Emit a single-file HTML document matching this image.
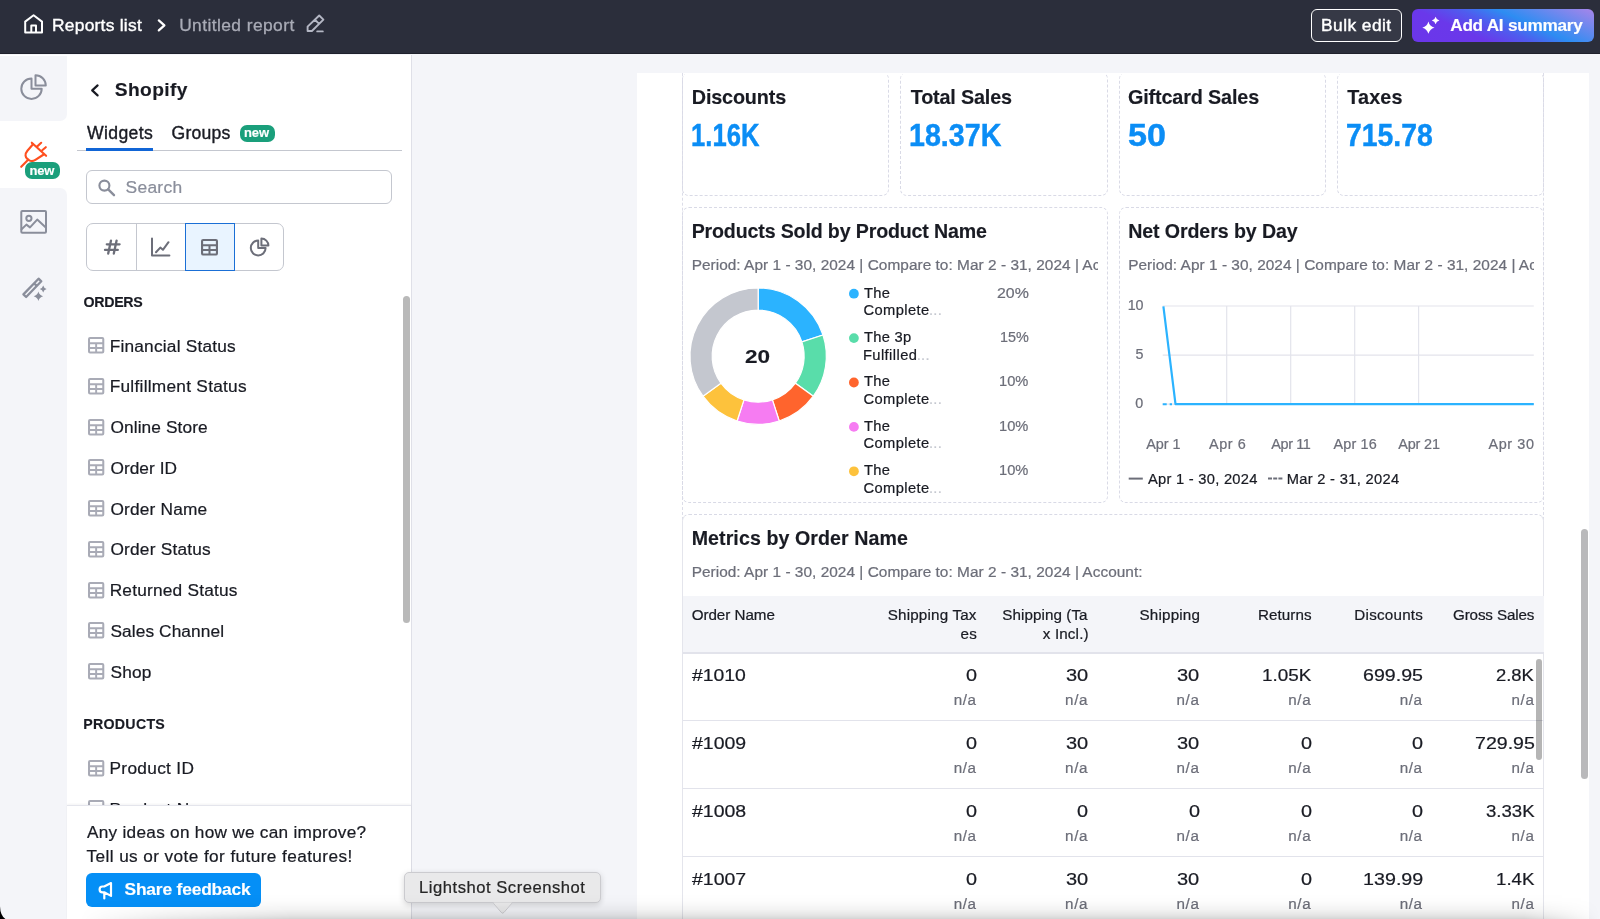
<!DOCTYPE html>
<html lang="en">
<head>
<meta charset="utf-8">
<title>Untitled report</title>
<style>
*{box-sizing:border-box;margin:0;padding:0}
html,body{width:1600px;height:919px;overflow:hidden;background:#f4f5f9;font-family:"Liberation Sans",sans-serif;color:#191b23}
body{position:relative}
.abs{position:absolute}
svg{position:absolute;overflow:visible}
.t{position:absolute;white-space:pre;line-height:1;color:#191b23;-webkit-text-stroke:0.22px}
.t.b{-webkit-text-stroke:0.15px}
.card{position:absolute;border:1px dashed #d9dae6;border-radius:7px}
.card.c1{border-top-color:transparent}
.ti{position:absolute;left:87.7px;width:16.3px;height:16.6px}
.hl{position:absolute;left:682.5px;width:861px;height:1.4px;background:#e2e3eb}
</style>
</head>
<body>
<div id="app" class="abs" style="left:0;top:0;width:1600px;height:919px;will-change:transform">

<!-- TOPBAR -->
<div class="abs" style="left:0;top:0;width:1600px;height:54px;background:#2b2e3b;border-bottom:1px solid #1f212c"></div>
<svg style="left:0;top:0" width="340" height="53" fill="none" stroke-linecap="round" stroke-linejoin="round">
  <path d="M25.2 21.6 L33.6 15.3 L42 21.6 V32.6 H25.2 Z M31.300 32.400 V25.600 H36 V32.400" stroke="#fff" stroke-width="2"/>
  <path d="M158.8 20.4 L164.4 25.4 L158.8 30.4" stroke="#fff" stroke-width="2.2"/>
  <path d="M307.6 31 V26.6 L319.2 15.5 L323.4 19.6 L311.9 31 Z M314.9 19.7 L319.2 23.9 M317.2 31.4 H322.8" stroke="#b4b7c4" stroke-width="1.9"/>
</svg>
<div class="abs" style="left:1310.9px;top:8.7px;width:91.3px;height:33.2px;border:1px solid #fff;border-radius:6px;background:#363946"></div>
<div class="abs" style="left:1411.6px;top:8.7px;width:182.8px;height:33.2px;border-radius:6px;background:linear-gradient(24deg,#6b36ea 0%,#6a38ea 30%,#4f5cee 47%,#2d8df2 62%,#6f88ee 82%,#a885ea 100%)"></div>
<svg style="left:0;top:0" width="1600" height="53" fill="#fff"><path d="M1428.4 21.60 Q1429.62 26.48 1434.50 27.7 Q1429.62 28.92 1428.4 33.80 Q1427.18 28.92 1422.30 27.7 Q1427.18 26.48 1428.4 21.60Z M1435.6 16.70 Q1436.36 19.74 1439.40 20.5 Q1436.36 21.26 1435.6 24.30 Q1434.84 21.26 1431.80 20.5 Q1434.84 19.74 1435.6 16.70Z"/></svg>

<!-- RAIL -->
<div class="abs" style="left:0;top:55px;width:67px;height:864px;background:#fff"></div>
<div class="abs" style="left:0;top:56px;width:67px;height:65px;background:#f4f5f9;border-bottom-right-radius:7px"></div>
<div class="abs" style="left:0;top:188px;width:67px;height:731px;background:#f4f5f9;border-top-right-radius:7px"></div>
<svg style="left:0;top:53px" width="67" height="270" fill="none" stroke="#8a8e9b" stroke-width="2" stroke-linecap="round" stroke-linejoin="round">
  <!-- pie -->
  <path d="M31.5 25.5 A10.2 10.2 0 1 0 41.7 35.7 H31.5 Z"/>
  <path d="M35.5 22.3 A10.3 10.3 0 0 1 45.8 32.6 H35.5 Z"/>
  <!-- image -->
  <rect x="21.3" y="158" width="24.7" height="21.8" rx="1"/>
  <circle cx="28.9" cy="165.3" r="2.6"/>
  <path d="M21.6 176.2 L26.4 171.6 L30 174.4 L37.2 166.6 L45.8 174.6"/>
  <!-- wand -->
  <path d="M38.56 225.68 L41.3 228.32 L26.14 244.02 L23.4 241.38 Z M34.1 230.3 L36.85 232.9" stroke-width="2.3"/>
</svg>
<svg style="left:0;top:53px" width="67" height="270" fill="#8a8e9b">
  <path d="M38.4 238.60 Q39.34 242.36 43.10 243.3 Q39.34 244.24 38.4 248.00 Q37.46 244.24 33.70 243.3 Q37.46 242.36 38.4 238.60Z M43.2 232.60 Q43.88 235.32 46.60 236 Q43.88 236.68 43.2 239.40 Q42.52 236.68 39.80 236 Q42.52 235.32 43.2 232.60Z"/>
</svg>
<!-- plug -->
<svg style="left:0;top:53px" width="67" height="140" fill="none" stroke="#ff4f1f" stroke-width="2.1" stroke-linecap="round" stroke-linejoin="round">
  <path d="M21.2 113.800 L28.4 106.600"/>
  <path d="M31.800 89.700 L46.100 102.800"/>
  <path d="M33 91.200 L27.400 97.800 C24.600 101.200 25.200 104.400 27.600 106.200 C30.200 108.600 33 108.400 35.400 106.800 L43.700 101.500"/>
  <path d="M37 93.600 L41.200 89.800 M42.200 97.300 L45.800 94.200"/>
</svg>
<div class="abs" style="left:25.1px;top:162px;width:35px;height:16.9px;border-radius:7px;background:#1a9f7b"></div>

<!-- SIDEBAR -->
<div class="abs" style="left:67px;top:55px;width:344px;height:864px;background:#fff"></div>
<div class="abs" style="left:411px;top:55px;width:1.3px;height:864px;background:#dfe0e8"></div>
<svg style="left:67px;top:53px" width="345" height="230" fill="none" stroke-linecap="round" stroke-linejoin="round">
  <path d="M30.6 32.4 L25.2 37.4 L30.6 42.4" stroke="#191b23" stroke-width="2.2"/>
</svg>
<div class="abs" style="left:76.8px;top:150.2px;width:325.4px;height:1.1px;background:#c4c7cf"></div>
<div class="abs" style="left:86.2px;top:147.6px;width:67px;height:3.4px;background:#1165d6"></div>
<div class="abs" style="left:239.6px;top:124.8px;width:35px;height:16.8px;border-radius:7px;background:#1a9f7b"></div>
<div class="abs" style="left:86.4px;top:170.2px;width:305.6px;height:33.6px;border:1px solid #c4c7cf;border-radius:6px;background:#fff"></div>
<svg style="left:67px;top:53px" width="345" height="230" fill="none" stroke-linecap="round"><circle cx="37.4" cy="132.600" r="5" stroke="#8a8e9b" stroke-width="2.1"/><path d="M41.2 136.400 L47 142.200" stroke="#8a8e9b" stroke-width="2.4"/></svg>
<div class="abs" style="left:86.4px;top:223.3px;width:198.1px;height:47.5px;border:1px solid #c4c7cf;border-radius:7px;background:#fff"></div>
<div class="abs" style="left:135.9px;top:224px;width:1px;height:46px;background:#c4c7cf"></div>
<div class="abs" style="left:185px;top:223.3px;width:49.8px;height:47.5px;border:1px solid #1a6fd6;background:#e9f4ff"></div>
<svg style="left:86px;top:222px" width="200" height="50" fill="none" stroke="#6c6e79" stroke-width="2" stroke-linecap="round" stroke-linejoin="round">
  <path d="M20.800 22.300 H33.600 M19 27.900 H31.800 M25 18.600 L22.200 31.600 M30.600 18.600 L27.800 31.600" stroke-width="2.3"/>
  <path d="M66 16.500 V33.500 H83.400 M70 30.200 L74.300 25.600 L76.900 27.800 L82.500 20.200"/>
  <path d="M172.200 18.600 A7.4 7.4 0 1 0 179.600 26 H172.200 Z M175.400 16.600 A7 7 0 0 1 182.400 23.600 H175.400 Z"/>
</svg>
<svg style="left:201.3px;top:238.9px" width="17" height="16.6" viewBox="0 0 16 16" preserveAspectRatio="none" fill="none" stroke="#6c6e79"><rect x="1" y="1" width="14" height="14" rx="1" stroke-width="2"/><path d="M1 6.1H15M1 10.6H15M8 6V15" stroke-width="1.9"/></svg>
<div class="abs" style="left:403.3px;top:295.7px;width:7px;height:327.5px;border-radius:3.5px;background:#b9b9b9"></div>
<svg style="left:87.7px;top:337.2px" width="16.3" height="16.6" viewBox="0 0 16 16" preserveAspectRatio="none" fill="none" stroke="#a9abb6"><rect x="1" y="1" width="14" height="14" rx="1" stroke-width="2"/><path d="M1 6.1H15M1 10.6H15M8 6V15" stroke-width="1.9"/></svg>
<svg style="left:87.7px;top:377.95px" width="16.3" height="16.6" viewBox="0 0 16 16" preserveAspectRatio="none" fill="none" stroke="#a9abb6"><rect x="1" y="1" width="14" height="14" rx="1" stroke-width="2"/><path d="M1 6.1H15M1 10.6H15M8 6V15" stroke-width="1.9"/></svg>
<svg style="left:87.7px;top:418.7px" width="16.3" height="16.6" viewBox="0 0 16 16" preserveAspectRatio="none" fill="none" stroke="#a9abb6"><rect x="1" y="1" width="14" height="14" rx="1" stroke-width="2"/><path d="M1 6.1H15M1 10.6H15M8 6V15" stroke-width="1.9"/></svg>
<svg style="left:87.7px;top:459.45px" width="16.3" height="16.6" viewBox="0 0 16 16" preserveAspectRatio="none" fill="none" stroke="#a9abb6"><rect x="1" y="1" width="14" height="14" rx="1" stroke-width="2"/><path d="M1 6.1H15M1 10.6H15M8 6V15" stroke-width="1.9"/></svg>
<svg style="left:87.7px;top:500.2px" width="16.3" height="16.6" viewBox="0 0 16 16" preserveAspectRatio="none" fill="none" stroke="#a9abb6"><rect x="1" y="1" width="14" height="14" rx="1" stroke-width="2"/><path d="M1 6.1H15M1 10.6H15M8 6V15" stroke-width="1.9"/></svg>
<svg style="left:87.7px;top:540.95px" width="16.3" height="16.6" viewBox="0 0 16 16" preserveAspectRatio="none" fill="none" stroke="#a9abb6"><rect x="1" y="1" width="14" height="14" rx="1" stroke-width="2"/><path d="M1 6.1H15M1 10.6H15M8 6V15" stroke-width="1.9"/></svg>
<svg style="left:87.7px;top:581.7px" width="16.3" height="16.6" viewBox="0 0 16 16" preserveAspectRatio="none" fill="none" stroke="#a9abb6"><rect x="1" y="1" width="14" height="14" rx="1" stroke-width="2"/><path d="M1 6.1H15M1 10.6H15M8 6V15" stroke-width="1.9"/></svg>
<svg style="left:87.7px;top:622.45px" width="16.3" height="16.6" viewBox="0 0 16 16" preserveAspectRatio="none" fill="none" stroke="#a9abb6"><rect x="1" y="1" width="14" height="14" rx="1" stroke-width="2"/><path d="M1 6.1H15M1 10.6H15M8 6V15" stroke-width="1.9"/></svg>
<svg style="left:87.7px;top:663.2px" width="16.3" height="16.6" viewBox="0 0 16 16" preserveAspectRatio="none" fill="none" stroke="#a9abb6"><rect x="1" y="1" width="14" height="14" rx="1" stroke-width="2"/><path d="M1 6.1H15M1 10.6H15M8 6V15" stroke-width="1.9"/></svg>
<svg style="left:87.7px;top:759.5px" width="16.3" height="16.6" viewBox="0 0 16 16" preserveAspectRatio="none" fill="none" stroke="#a9abb6"><rect x="1" y="1" width="14" height="14" rx="1" stroke-width="2"/><path d="M1 6.1H15M1 10.6H15M8 6V15" stroke-width="1.9"/></svg>
<svg style="left:87.7px;top:800.25px" width="16.3" height="16.6" viewBox="0 0 16 16" preserveAspectRatio="none" fill="none" stroke="#a9abb6"><rect x="1" y="1" width="14" height="14" rx="1" stroke-width="2"/><path d="M1 6.1H15M1 10.6H15M8 6V15" stroke-width="1.9"/></svg>
<!-- footer -->
<div class="abs" style="left:67px;top:804.8px;width:344px;height:115px;background:#fff;border-top:1.2px solid #e4e5ec;box-shadow:0 -1px 2px rgba(25,27,35,.05);z-index:1"></div>
<div class="abs" style="left:86.3px;top:873.2px;width:175.1px;height:33.6px;border-radius:6px;background:#058ff6;z-index:2"></div>
<svg style="left:96px;top:880px;z-index:3" width="20" height="22" fill="none" stroke="#fff" stroke-width="2" stroke-linejoin="round" stroke-linecap="round">
  <path d="M15 3.100 L8.200 6.500 H6.500 A2.900 2.900 0 0 0 6.500 12.300 H8.200 L15 15.900 Z M8.300 13 V18.500" stroke-width="2.2"/>
</svg>
<!-- tooltip -->
<div class="abs" style="left:403.6px;top:871.7px;width:197.7px;height:31.7px;background:#e9e9ea;border:1px solid #cbcbcf;border-radius:5px;box-shadow:0 2px 6px rgba(0,0,0,.16);z-index:2"></div>
<svg style="left:490px;top:902px;z-index:3" width="26" height="14"><path d="M3.400 0.400 H21.900 L14 10.400 Q12.600 12 11.200 10.400 Z" fill="#e9e9ea"/><path d="M3.400 1.200 L11.200 10.400 Q12.600 12 14 10.400 L21.900 1.200" fill="none" stroke="#cbcbcf" stroke-width="1"/></svg>

<!-- MAIN -->
<div class="abs" style="left:637px;top:72.8px;width:952px;height:847px;background:#fff"></div>
<div class="abs" style="left:681.8px;top:73px;width:862.5px;height:846px;border-left:1px dashed #dcdde8;border-right:1px dashed #dcdde8"></div>
<div class="card c1" style="left:681.8px;top:72.4px;width:207.7px;height:124px"></div>
<div class="card c1" style="left:900.2px;top:72.4px;width:207.4px;height:124px"></div>
<div class="card c1" style="left:1118.5px;top:72.4px;width:207.4px;height:124px"></div>
<div class="card c1" style="left:1336.6px;top:72.4px;width:207.700px;height:124px"></div>
<div class="card" style="left:681.8px;top:207.2px;width:425.8px;height:296px"></div>
<div class="card" style="left:1118.5px;top:207.2px;width:425.8px;height:296px"></div>
<div class="card" style="left:681.8px;top:514.2px;width:862.5px;height:420px;border-left:1px solid #e4e5ec;border-right:1px solid #e4e5ec;border-bottom-left-radius:0;border-bottom-right-radius:0"></div>
<svg style="left:0;top:0" width="1600" height="919"><path d="M758.15 287.90 A68.2 68.2 0 0 1 823.01 335.03 L801.90 341.89 A46 46 0 0 0 758.15 310.10 Z" fill="#2bb3ff" stroke="#fff" stroke-width="1.2"/><path d="M823.01 335.03 A68.2 68.2 0 0 1 813.32 396.19 L795.36 383.14 A46 46 0 0 0 801.90 341.89 Z" fill="#59ddaa" stroke="#fff" stroke-width="1.2"/><path d="M813.32 396.19 A68.2 68.2 0 0 1 779.22 420.96 L772.36 399.85 A46 46 0 0 0 795.36 383.14 Z" fill="#ff642d" stroke="#fff" stroke-width="1.2"/><path d="M779.22 420.96 A68.2 68.2 0 0 1 737.08 420.96 L743.94 399.85 A46 46 0 0 0 772.36 399.85 Z" fill="#f67cf2" stroke="#fff" stroke-width="1.2"/><path d="M737.08 420.96 A68.2 68.2 0 0 1 702.98 396.19 L720.94 383.14 A46 46 0 0 0 743.94 399.85 Z" fill="#fdc23c" stroke="#fff" stroke-width="1.2"/><path d="M702.98 396.19 A68.2 68.2 0 0 1 758.15 287.90 L758.15 310.10 A46 46 0 0 0 720.94 383.14 Z" fill="#c4c7cf" stroke="#fff" stroke-width="1.2"/></svg>
<svg style="left:0;top:0" width="1600" height="919">
<circle cx="853.9" cy="293.7" r="4.9" fill="#2bb3ff"/><circle cx="853.9" cy="338.1" r="4.9" fill="#59ddaa"/><circle cx="853.9" cy="382.5" r="4.9" fill="#ff642d"/><circle cx="853.9" cy="426.9" r="4.9" fill="#f67cf2"/><circle cx="853.9" cy="471.3" r="4.9" fill="#fdc23c"/>
  <g stroke="#e3e4ec" stroke-width="1.2" fill="none">
    <path d="M1162.7 306 H1533.800 M1162.700 355.100 H1533.800 M1162.700 404.200 H1533.800"/>
    <path d="M1226.700 306 V404.200 M1290.700 306 V404.200 M1354.700 306 V404.200 M1418.600 306 V404.200"/>
  </g>
  <path d="M1162.700 404.200 H1172" stroke="#2bb3ff" stroke-width="2" stroke-dasharray="4 3" fill="none"/>
  <path d="M1163.400 306.400 L1175.500 404.200 H1533.800" stroke="#2bb3ff" stroke-width="2.2" fill="none" stroke-linejoin="round"/>
  <path d="M1128.700 478.600 H1142.800" stroke="#6c6e79" stroke-width="2" fill="none"/>
  <path d="M1268 478.600 H1282.400" stroke="#6c6e79" stroke-width="2" stroke-dasharray="4 1.2" fill="none"/>
</svg>
<!-- table -->
<div class="abs" style="left:682.6px;top:596.3px;width:861px;height:56.2px;background:#f4f5f9"></div>
<div class="hl" style="top:652.2px"></div>
<div class="hl" style="top:720.1px"></div>
<div class="hl" style="top:788.100px"></div>
<div class="hl" style="top:856.100px"></div>
<div class="abs" style="left:1535.6px;top:659px;width:6.6px;height:100.6px;border-radius:3.3px;background:rgba(0,0,0,.29);z-index:2"></div>
<div class="abs" style="left:1581px;top:529.4px;width:7px;height:249.8px;border-radius:3.5px;background:#b9b9bb"></div>

<!-- TEXT -->
<div class="t" style="left:52.0px;top:17px;font-size:17.4px;letter-spacing:0.25px;color:#fff;-webkit-text-stroke:0.4px;">Reports list</div>
<div class="t" style="left:179.15px;top:17px;font-size:17.4px;letter-spacing:0.418px;color:#a9abb6;-webkit-text-stroke:0.3px;">Untitled report</div>
<div class="t" style="left:1321.0px;top:17px;font-size:17.4px;letter-spacing:0.438px;color:#fff;-webkit-text-stroke:0.4px;">Bulk edit</div>
<div class="t b" style="left:1450.25px;top:17px;font-size:17.2px;font-weight:bold;letter-spacing:-0.269px;color:#fff;">Add AI summary</div>
<div class="t b" style="left:114.8px;top:80px;font-size:19.2px;font-weight:bold;letter-spacing:0.375px;">Shopify</div>
<div class="t" style="left:86.95px;top:125px;font-size:17.6px;letter-spacing:0.392px;-webkit-text-stroke:0.38px;">Widgets</div>
<div class="t" style="left:171.6px;top:125px;font-size:17.6px;letter-spacing:0.2px;-webkit-text-stroke:0.38px;">Groups</div>
<div class="t b" style="left:243.95px;top:126px;font-size:13px;font-weight:bold;letter-spacing:-0.1px;color:#fff;">new</div>
<div class="t b" style="left:29.55px;top:164px;font-size:13px;font-weight:bold;letter-spacing:-0.2px;color:#fff;">new</div>
<div class="t" style="left:125.55px;top:179px;font-size:17.4px;letter-spacing:0.29px;color:#8a8e9b;">Search</div>
<div class="t b" style="left:83.6px;top:295px;font-size:14.2px;font-weight:bold;letter-spacing:-0.31px;">ORDERS</div>
<div class="t b" style="left:83.3px;top:717px;font-size:14.2px;font-weight:bold;letter-spacing:0.271px;">PRODUCTS</div>
<div class="t" style="left:109.7px;top:338px;font-size:17.3px;letter-spacing:0.203px;">Financial Status</div>
<div class="t" style="left:109.7px;top:378px;font-size:17.3px;letter-spacing:0.259px;">Fulfillment Status</div>
<div class="t" style="left:110.45px;top:419px;font-size:17.3px;letter-spacing:0.109px;">Online Store</div>
<div class="t" style="left:110.45px;top:460px;font-size:17.3px;letter-spacing:0.036px;">Order ID</div>
<div class="t" style="left:110.45px;top:501px;font-size:17.3px;letter-spacing:0.178px;">Order Name</div>
<div class="t" style="left:110.45px;top:541px;font-size:17.3px;letter-spacing:0.209px;">Order Status</div>
<div class="t" style="left:109.7px;top:582px;font-size:17.3px;letter-spacing:0.204px;">Returned Status</div>
<div class="t" style="left:110.45px;top:623px;font-size:17.3px;letter-spacing:0.1px;">Sales Channel</div>
<div class="t" style="left:110.45px;top:664px;font-size:17.3px;letter-spacing:0.2px;">Shop</div>
<div class="t" style="left:109.5px;top:760px;font-size:17.3px;letter-spacing:0.306px;">Product ID</div>
<div class="t" style="left:109.5px;top:801px;font-size:17.3px;letter-spacing:0.35px;">Product Name</div>
<div class="t" style="left:87.0px;top:824px;font-size:17.2px;letter-spacing:0.282px;z-index:3;">Any ideas on how we can improve?</div>
<div class="t" style="left:86.5px;top:848px;font-size:17.2px;letter-spacing:0.413px;z-index:3;">Tell us or vote for future features!</div>
<div class="t b" style="left:124.5px;top:881px;font-size:17.4px;font-weight:bold;letter-spacing:-0.185px;color:#fff;z-index:3;">Share feedback</div>
<div class="t" style="left:419.05px;top:880px;font-size:16.6px;letter-spacing:0.526px;color:#262626;z-index:3;">Lightshot Screenshot</div>
<div class="t b" style="left:691.75px;top:88px;font-size:19.8px;font-weight:bold;letter-spacing:-0.15px;">Discounts</div>
<div class="t b" style="left:910.75px;top:88px;font-size:19.8px;font-weight:bold;letter-spacing:-0.17px;">Total Sales</div>
<div class="t b" style="left:1128.0px;top:88px;font-size:19.8px;font-weight:bold;letter-spacing:-0.142px;">Giftcard Sales</div>
<div class="t b" style="left:1347.25px;top:88px;font-size:19.8px;font-weight:bold;letter-spacing:0.15px;">Taxes</div>
<div class="t b" style="left:690.62px;top:120px;font-size:31.4px;font-weight:bold;color:#0b8df5;transform:scaleX(0.8166);transform-origin:0 0;-webkit-text-stroke:0.45px;">1.16K</div>
<div class="t b" style="left:909.18px;top:120px;font-size:31.4px;font-weight:bold;color:#0b8df5;transform:scaleX(0.9124);transform-origin:0 0;-webkit-text-stroke:0.45px;">18.37K</div>
<div class="t b" style="left:1128.11px;top:120px;font-size:31.4px;font-weight:bold;color:#0b8df5;transform:scaleX(1.0862);transform-origin:0 0;-webkit-text-stroke:0.45px;">50</div>
<div class="t b" style="left:1346.37px;top:120px;font-size:31.4px;font-weight:bold;color:#0b8df5;transform:scaleX(0.9035);transform-origin:0 0;-webkit-text-stroke:0.45px;">715.78</div>
<div class="t b" style="left:691.65px;top:222px;font-size:19.6px;font-weight:bold;letter-spacing:-0.146px;">Products Sold by Product Name</div>
<div class="t b" style="left:1128.15px;top:222px;font-size:19.6px;font-weight:bold;letter-spacing:-0.088px;">Net Orders by Day</div>
<div class="t b" style="left:691.65px;top:529px;font-size:19.6px;font-weight:bold;letter-spacing:0.09px;">Metrics by Order Name</div>
<div class="t" style="left:863.95px;top:286px;font-size:14.7px;letter-spacing:0.3px;">The</div>
<div class="t" style="left:863.45px;top:303px;font-size:14.7px;letter-spacing:0.4px;">Complete</div>
<div class="t" style="left:928.95px;top:303px;font-size:14.7px;letter-spacing:0.275px;color:#c4c7cf;">...</div>
<div class="t" style="left:996.89px;top:286px;font-size:14.7px;color:#6c6e79;transform:scaleX(1.0821);transform-origin:0 0;">20%</div>
<div class="t" style="left:863.95px;top:330px;font-size:14.7px;letter-spacing:0.3px;">The 3p</div>
<div class="t" style="left:862.95px;top:348px;font-size:14.7px;letter-spacing:0.425px;">Fulfilled</div>
<div class="t" style="left:916.65px;top:348px;font-size:14.7px;letter-spacing:0.375px;color:#c4c7cf;">...</div>
<div class="t" style="left:999.82px;top:330px;font-size:14.7px;color:#6c6e79;transform:scaleX(0.9802);transform-origin:0 0;">15%</div>
<div class="t" style="left:863.95px;top:374px;font-size:14.7px;letter-spacing:0.3px;">The</div>
<div class="t" style="left:863.45px;top:392px;font-size:14.7px;letter-spacing:0.4px;">Complete</div>
<div class="t" style="left:928.95px;top:392px;font-size:14.7px;letter-spacing:0.275px;color:#c4c7cf;">...</div>
<div class="t" style="left:999.3px;top:374px;font-size:14.7px;color:#6c6e79;transform:scaleX(0.9982);transform-origin:0 0;">10%</div>
<div class="t" style="left:863.95px;top:419px;font-size:14.7px;letter-spacing:0.3px;">The</div>
<div class="t" style="left:863.45px;top:436px;font-size:14.7px;letter-spacing:0.4px;">Complete</div>
<div class="t" style="left:928.95px;top:436px;font-size:14.7px;letter-spacing:0.275px;color:#c4c7cf;">...</div>
<div class="t" style="left:999.3px;top:419px;font-size:14.7px;color:#6c6e79;transform:scaleX(0.9982);transform-origin:0 0;">10%</div>
<div class="t" style="left:863.95px;top:463px;font-size:14.7px;letter-spacing:0.3px;">The</div>
<div class="t" style="left:863.45px;top:481px;font-size:14.7px;letter-spacing:0.4px;">Complete</div>
<div class="t" style="left:928.95px;top:481px;font-size:14.7px;letter-spacing:0.275px;color:#c4c7cf;">...</div>
<div class="t" style="left:999.3px;top:463px;font-size:14.7px;color:#6c6e79;transform:scaleX(0.9982);transform-origin:0 0;">10%</div>
<div class="t b" style="left:745.3px;top:348px;font-size:18.8px;font-weight:bold;transform:scaleX(1.2);transform-origin:0 0;">20</div>
<div class="t" style="left:1127.7px;top:298px;font-size:14.3px;letter-spacing:-0.15px;color:#6c6e79;">10</div>
<div class="t" style="left:1135.55px;top:347px;font-size:14.3px;color:#6c6e79;">5</div>
<div class="t" style="left:1135.3px;top:396px;font-size:14.3px;color:#6c6e79;">0</div>
<div class="t" style="left:1146.3px;top:437px;font-size:14.4px;letter-spacing:-0.037px;color:#6c6e79;">Apr 1</div>
<div class="t" style="left:1209.1px;top:437px;font-size:14.4px;letter-spacing:0.538px;color:#6c6e79;">Apr 6</div>
<div class="t" style="left:1271.2px;top:437px;font-size:14.4px;letter-spacing:-0.33px;color:#6c6e79;">Apr 11</div>
<div class="t" style="left:1333.5px;top:437px;font-size:14.4px;letter-spacing:0.15px;color:#6c6e79;">Apr 16</div>
<div class="t" style="left:1398.2px;top:437px;font-size:14.4px;letter-spacing:-0.13px;color:#6c6e79;">Apr 21</div>
<div class="t" style="left:1488.5px;top:437px;font-size:14.4px;letter-spacing:0.61px;color:#6c6e79;">Apr 30</div>
<div class="t" style="left:1147.9px;top:472px;font-size:14.7px;letter-spacing:0.28px;">Apr 1 - 30, 2024</div>
<div class="t" style="left:1286.65px;top:472px;font-size:14.7px;letter-spacing:0.31px;">Mar 2 - 31, 2024</div>
<div class="t" style="left:691.65px;top:607px;font-size:15.2px;letter-spacing:-0.028px;">Order Name</div>
<div class="t" style="left:887.75px;top:607px;font-size:15.2px;letter-spacing:0.177px;">Shipping Tax</div>
<div class="t" style="left:960.6px;top:626px;font-size:15.2px;letter-spacing:0.1px;">es</div>
<div class="t" style="left:1002.25px;top:607px;font-size:15.2px;letter-spacing:0.077px;">Shipping (Ta</div>
<div class="t" style="left:1042.75px;top:626px;font-size:15.2px;letter-spacing:0.157px;">x Incl.)</div>
<div class="t" style="left:1139.55px;top:607px;font-size:15.2px;letter-spacing:0.171px;">Shipping</div>
<div class="t" style="left:1258.05px;top:607px;font-size:15.2px;letter-spacing:0.042px;">Returns</div>
<div class="t" style="left:1354.35px;top:607px;font-size:15.2px;letter-spacing:0.231px;">Discounts</div>
<div class="t" style="left:1452.95px;top:607px;font-size:15.2px;letter-spacing:-0.12px;">Gross Sales</div>
<div class="t" style="left:692.3px;top:667px;font-size:17.4px;transform:scaleX(1.1141);transform-origin:0 0;">#1010</div>
<div class="t" style="left:965.95px;top:667px;font-size:17.4px;transform:scaleX(1.1394);transform-origin:0 0;">0</div>
<div class="t" style="left:953.7px;top:692px;font-size:15.2px;letter-spacing:0.625px;color:#6c6e79;">n/a</div>
<div class="t" style="left:1066.04px;top:667px;font-size:17.4px;transform:scaleX(1.15);transform-origin:0 0;">30</div>
<div class="t" style="left:1065.1px;top:692px;font-size:15.2px;letter-spacing:0.625px;color:#6c6e79;">n/a</div>
<div class="t" style="left:1177.44px;top:667px;font-size:17.4px;transform:scaleX(1.15);transform-origin:0 0;">30</div>
<div class="t" style="left:1176.5px;top:692px;font-size:15.2px;letter-spacing:0.625px;color:#6c6e79;">n/a</div>
<div class="t" style="left:1261.64px;top:667px;font-size:17.4px;transform:scaleX(1.0864);transform-origin:0 0;">1.05K</div>
<div class="t" style="left:1288.3px;top:692px;font-size:15.2px;letter-spacing:0.625px;color:#6c6e79;">n/a</div>
<div class="t" style="left:1362.97px;top:667px;font-size:17.4px;transform:scaleX(1.1282);transform-origin:0 0;">699.95</div>
<div class="t" style="left:1399.7px;top:692px;font-size:15.2px;letter-spacing:0.625px;color:#6c6e79;">n/a</div>
<div class="t" style="left:1496.41px;top:667px;font-size:17.4px;transform:scaleX(1.059);transform-origin:0 0;">2.8K</div>
<div class="t" style="left:1511.5px;top:692px;font-size:15.2px;letter-spacing:0.625px;color:#6c6e79;">n/a</div>
<div class="t" style="left:692.3px;top:735px;font-size:17.4px;transform:scaleX(1.12);transform-origin:0 0;">#1009</div>
<div class="t" style="left:965.95px;top:735px;font-size:17.4px;transform:scaleX(1.1394);transform-origin:0 0;">0</div>
<div class="t" style="left:953.7px;top:760px;font-size:15.2px;letter-spacing:0.625px;color:#6c6e79;">n/a</div>
<div class="t" style="left:1066.04px;top:735px;font-size:17.4px;transform:scaleX(1.15);transform-origin:0 0;">30</div>
<div class="t" style="left:1065.1px;top:760px;font-size:15.2px;letter-spacing:0.625px;color:#6c6e79;">n/a</div>
<div class="t" style="left:1177.44px;top:735px;font-size:17.4px;transform:scaleX(1.15);transform-origin:0 0;">30</div>
<div class="t" style="left:1176.5px;top:760px;font-size:15.2px;letter-spacing:0.625px;color:#6c6e79;">n/a</div>
<div class="t" style="left:1300.55px;top:735px;font-size:17.4px;transform:scaleX(1.1394);transform-origin:0 0;">0</div>
<div class="t" style="left:1288.3px;top:760px;font-size:15.2px;letter-spacing:0.625px;color:#6c6e79;">n/a</div>
<div class="t" style="left:1411.95px;top:735px;font-size:17.4px;transform:scaleX(1.1394);transform-origin:0 0;">0</div>
<div class="t" style="left:1399.7px;top:760px;font-size:15.2px;letter-spacing:0.625px;color:#6c6e79;">n/a</div>
<div class="t" style="left:1474.87px;top:735px;font-size:17.4px;transform:scaleX(1.1262);transform-origin:0 0;">729.95</div>
<div class="t" style="left:1511.5px;top:760px;font-size:15.2px;letter-spacing:0.625px;color:#6c6e79;">n/a</div>
<div class="t" style="left:692.3px;top:803px;font-size:17.4px;transform:scaleX(1.12);transform-origin:0 0;">#1008</div>
<div class="t" style="left:965.95px;top:803px;font-size:17.4px;transform:scaleX(1.1394);transform-origin:0 0;">0</div>
<div class="t" style="left:953.7px;top:828px;font-size:15.2px;letter-spacing:0.625px;color:#6c6e79;">n/a</div>
<div class="t" style="left:1077.35px;top:803px;font-size:17.4px;transform:scaleX(1.1394);transform-origin:0 0;">0</div>
<div class="t" style="left:1065.1px;top:828px;font-size:15.2px;letter-spacing:0.625px;color:#6c6e79;">n/a</div>
<div class="t" style="left:1188.75px;top:803px;font-size:17.4px;transform:scaleX(1.1394);transform-origin:0 0;">0</div>
<div class="t" style="left:1176.5px;top:828px;font-size:15.2px;letter-spacing:0.625px;color:#6c6e79;">n/a</div>
<div class="t" style="left:1300.55px;top:803px;font-size:17.4px;transform:scaleX(1.1394);transform-origin:0 0;">0</div>
<div class="t" style="left:1288.3px;top:828px;font-size:15.2px;letter-spacing:0.625px;color:#6c6e79;">n/a</div>
<div class="t" style="left:1411.95px;top:803px;font-size:17.4px;transform:scaleX(1.1394);transform-origin:0 0;">0</div>
<div class="t" style="left:1399.7px;top:828px;font-size:15.2px;letter-spacing:0.625px;color:#6c6e79;">n/a</div>
<div class="t" style="left:1485.6px;top:803px;font-size:17.4px;transform:scaleX(1.0697);transform-origin:0 0;">3.33K</div>
<div class="t" style="left:1511.5px;top:828px;font-size:15.2px;letter-spacing:0.625px;color:#6c6e79;">n/a</div>
<div class="t" style="left:692.3px;top:871px;font-size:17.4px;transform:scaleX(1.12);transform-origin:0 0;">#1007</div>
<div class="t" style="left:965.95px;top:871px;font-size:17.4px;transform:scaleX(1.1394);transform-origin:0 0;">0</div>
<div class="t" style="left:953.7px;top:896px;font-size:15.2px;letter-spacing:0.625px;color:#6c6e79;">n/a</div>
<div class="t" style="left:1066.04px;top:871px;font-size:17.4px;transform:scaleX(1.15);transform-origin:0 0;">30</div>
<div class="t" style="left:1065.1px;top:896px;font-size:15.2px;letter-spacing:0.625px;color:#6c6e79;">n/a</div>
<div class="t" style="left:1177.44px;top:871px;font-size:17.4px;transform:scaleX(1.15);transform-origin:0 0;">30</div>
<div class="t" style="left:1176.5px;top:896px;font-size:15.2px;letter-spacing:0.625px;color:#6c6e79;">n/a</div>
<div class="t" style="left:1300.55px;top:871px;font-size:17.4px;transform:scaleX(1.1394);transform-origin:0 0;">0</div>
<div class="t" style="left:1288.3px;top:896px;font-size:15.2px;letter-spacing:0.625px;color:#6c6e79;">n/a</div>
<div class="t" style="left:1362.98px;top:871px;font-size:17.4px;transform:scaleX(1.1333);transform-origin:0 0;">139.99</div>
<div class="t" style="left:1399.7px;top:896px;font-size:15.2px;letter-spacing:0.625px;color:#6c6e79;">n/a</div>
<div class="t" style="left:1495.86px;top:871px;font-size:17.4px;transform:scaleX(1.0745);transform-origin:0 0;">1.4K</div>
<div class="t" style="left:1511.5px;top:896px;font-size:15.2px;letter-spacing:0.625px;color:#6c6e79;">n/a</div>
<div class="abs" style="left:690.9px;top:254.9px;width:406.9px;height:22px;overflow:hidden"><div class="t" style="left:0.75px;top:2px;font-size:15.4px;letter-spacing:0.035px;color:#6c6e79">Period: Apr 1 - 30, 2024 | Compare to: Mar 2 - 31, 2024 | Account:</div></div>
<div class="abs" style="left:1127.4px;top:254.9px;width:406.8px;height:22px;overflow:hidden"><div class="t" style="left:0.75px;top:2px;font-size:15.4px;letter-spacing:0.035px;color:#6c6e79">Period: Apr 1 - 30, 2024 | Compare to: Mar 2 - 31, 2024 | Account:</div></div>
<div class="abs" style="left:690.9px;top:562px;width:509.1px;height:22px;overflow:hidden"><div class="t" style="left:0.75px;top:2px;font-size:15.4px;letter-spacing:0.035px;color:#6c6e79">Period: Apr 1 - 30, 2024 | Compare to: Mar 2 - 31, 2024 | Account:</div></div>

<!-- OVERLAYS -->
<div class="abs" style="left:80px;top:893px;width:1520px;height:26px;background:linear-gradient(to bottom,rgba(0,0,0,0) 0%,rgba(0,0,0,.012) 35%,rgba(0,0,0,.05) 65%,rgba(0,0,0,.10) 85%,rgba(0,0,0,.17) 100%);-webkit-mask-image:linear-gradient(to right,transparent 0,rgba(0,0,0,.55) 6%,#000 14%,#000 95%,transparent 100%);mask-image:linear-gradient(to right,transparent 0,rgba(0,0,0,.55) 6%,#000 14%,#000 95%,transparent 100%);z-index:5;pointer-events:none"></div>
<svg style="left:0;top:899px;z-index:6" width="20" height="20"><path d="M0 7.200 Q0.300 16.600 5.400 20 H0 Z" fill="#000"/></svg>

</div>
</body>
</html>
